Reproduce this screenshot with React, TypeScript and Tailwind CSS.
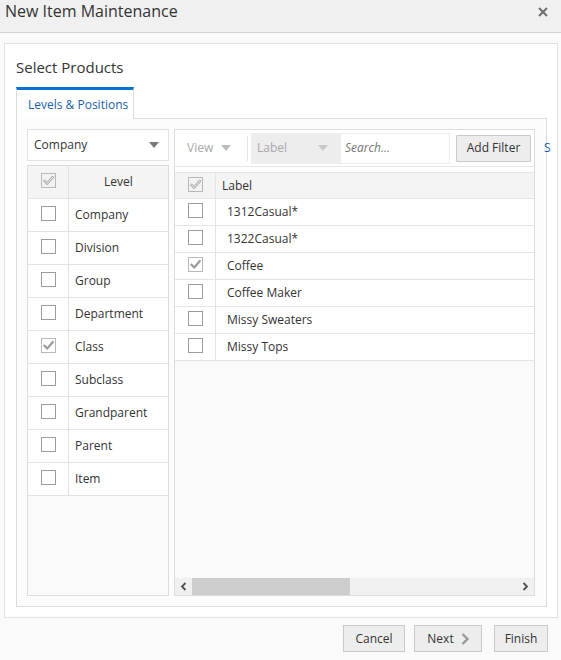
import React from "react";

const CheckBox = ({ checked = false, header = false }: { checked?: boolean; header?: boolean }) => (
  <svg width="15" height="15" viewBox="0 0 15 15" className="block">
    <rect x="0.5" y="0.5" width="14" height="14" fill={header ? "#f3f3f3" : "#ffffff"} stroke={checked || header ? "#b8b8b8" : "#9c9c9c"} />
    {header && (
      <path d="M3.5 7.8 L6.2 10.5 L11.8 4.2" fill="none" stroke="#a9a9a9" strokeWidth="2.6" strokeLinecap="round" strokeLinejoin="round" />
    )}
    {header && (
      <path d="M3.5 7.8 L6.2 10.5 L11.8 4.2" fill="none" stroke="#f3f3f3" strokeWidth="1" strokeLinecap="round" strokeLinejoin="round" />
    )}
    {checked && !header && (
      <path d="M3.3 7.6 L6.2 10.6 L11.8 4" fill="none" stroke="#9a9a9a" strokeWidth="2.2" strokeLinecap="round" strokeLinejoin="round" />
    )}
  </svg>
);

const Caret = ({ color = "#7a7a7a" }: { color?: string }) => (
  <svg width="10" height="6" viewBox="0 0 10 6" className="block">
    <path d="M0 0 H10 L5 6 Z" fill={color} />
  </svg>
);

const levels = [
  { name: "Company" },
  { name: "Division" },
  { name: "Group" },
  { name: "Department" },
  { name: "Class", checked: true },
  { name: "Subclass" },
  { name: "Grandparent" },
  { name: "Parent" },
  { name: "Item" },
];

const labels = [
  { name: "1312Casual*" },
  { name: "1322Casual*" },
  { name: "Coffee", checked: true },
  { name: "Coffee Maker" },
  { name: "Missy Sweaters" },
  { name: "Missy Tops" },
];

export default function App() {
  return (
    <div
      className="w-[561px] h-[660px] bg-[#fafafb] flex flex-col text-[#333333] overflow-hidden"
      style={{ fontFamily: '"Open Sans", "Noto Sans", sans-serif' }}
    >
      {/* Title bar */}
      <div className="h-[33px] shrink-0 bg-[#f0f0f1] border-b border-[#d4d4d6] flex items-start justify-between pl-[5px] pr-[13px]">
        <div className="text-[16px] leading-none text-[#333] pt-[3px]">New Item Maintenance</div>
        <svg width="10" height="10" viewBox="0 0 10 10" className="block mt-[7px]">
          <path d="M1 1 L9 9 M9 1 L1 9" stroke="#6f6f6f" strokeWidth="2" />
        </svg>
      </div>

      {/* Outer panel */}
      <div className="ml-[4px] mr-[3px] mt-[10px] h-[575px] shrink-0 border border-[#e2e2e4] bg-white flex flex-col pl-[11px] pr-[10px]">
        <div className="h-[43px] shrink-0 flex items-end pb-[12px] text-[15px] leading-none text-[#333]">Select Products</div>
        {/* Tab */}
        <div className="flex shrink-0">
          <div className="w-[118px] h-[32px] border-t-[3px] border-t-[#0572ce] border-x border-x-[#dcdcde] bg-white flex items-center pl-[11px] text-[12px] text-[#1a5fa8] -mb-px relative z-10">
            Levels &amp; Positions
          </div>
        </div>
        {/* Tab content */}
        <div className="h-[489px] shrink-0 border border-[#dcdcde] bg-[#fcfcfd] flex gap-[5px] pl-[10px] pr-[11px] pt-[10px] pb-[10px]">
          {/* Left column */}
          <div className="w-[142px] shrink-0 flex flex-col gap-[4px]">
            <div className="h-[32px] shrink-0 border border-[#e2e2e4] bg-white flex items-center justify-between pl-[6px] pr-[9px] text-[12px] text-[#333]">
              <span>Company</span>
              <Caret />
            </div>
            <div className="flex-1 border border-[#dcdcde] bg-[#fafafb] flex flex-col">
              <div className="h-[33px] shrink-0 flex bg-[#f4f4f5] border-b border-[#e2e2e4]">
                <div className="w-[41px] shrink-0 border-r border-[#e2e2e4] flex items-center justify-center pb-[3px]">
                  <CheckBox header />
                </div>
                <div className="flex-1 flex items-center justify-center text-[12px] text-[#333]">Level</div>
              </div>
              {levels.map((l) => (
                <div key={l.name} className="h-[33px] shrink-0 flex bg-white border-b border-[#e2e2e4]">
                  <div className="w-[41px] shrink-0 border-r border-[#e2e2e4] flex items-center justify-center pb-[3px]">
                    <CheckBox checked={!!l.checked} />
                  </div>
                  <div className="flex-1 flex items-center pl-[6px] text-[12px] text-[#333]">{l.name}</div>
                </div>
              ))}
            </div>
          </div>

          {/* Right column */}
          <div className="flex-1 min-w-0 border border-[#dcdcde] bg-[#fafafb] flex flex-col">
            {/* Toolbar */}
            <div className="h-[37px] shrink-0 bg-white border-b border-[#e6e6e8] flex items-center pl-[12px] whitespace-nowrap">
              <div className="shrink-0 flex items-center gap-[8px] text-[12px] text-[#a8a8a8] w-[60px]">
                <span>View</span>
                <Caret color="#bcbcbc" />
              </div>
              <div className="shrink-0 w-px h-[25px] bg-[#e4e4e6] mr-[3px]" />
              <div className="shrink-0 h-[31px] w-[89px] bg-[#ededee] flex items-center justify-between pl-[6px] pr-[12px] text-[12px] text-[#a8a8a8]">
                <span>Label</span>
                <Caret color="#c8c8c8" />
              </div>
              <div className="shrink-0 h-[31px] w-[110px] bg-white border border-[#ececee] flex items-center pl-[4px] text-[12px] text-[#777] italic">
                Search...
              </div>
              <div className="shrink-0 ml-[6px] h-[27px] w-[75px] bg-[#ededee] border border-[#c9c9cb] rounded-[1px] flex items-center justify-center text-[12px] text-[#333]">
                Add Filter
              </div>
              <span className="shrink-0 ml-[13px] text-[12px] text-[#1a5fa8]">S</span>
            </div>
            <div className="h-[5px] shrink-0 bg-white" />
            {/* Table header */}
            <div className="h-[27px] shrink-0 flex bg-[#f4f4f5] border-y border-[#e4e4e6]">
              <div className="w-[41px] shrink-0 border-r border-[#e4e4e6] flex items-center justify-center pb-[2px]">
                <CheckBox header />
              </div>
              <div className="flex-1 flex items-center pl-[6px] text-[12px] text-[#333]">Label</div>
            </div>
            {labels.map((l) => (
              <div key={l.name} className="h-[27px] shrink-0 flex bg-white border-b border-[#e4e4e6]">
                <div className="w-[41px] shrink-0 border-r border-[#e4e4e6] flex items-center justify-center pb-[3px]">
                  <CheckBox checked={!!l.checked} />
                </div>
                <div className="flex-1 flex items-center pl-[11px] text-[12px] text-[#333]">{l.name}</div>
              </div>
            ))}
            <div className="flex-1" />
            {/* Scrollbar */}
            <div className="h-[17px] shrink-0 flex bg-[#f0f0f0]">
              <div className="w-[17px] shrink-0 flex items-center justify-center">
                <svg width="7" height="9" viewBox="0 0 7 9" className="block">
                  <path d="M5.5 1 L2 4.5 L5.5 8" fill="none" stroke="#505050" strokeWidth="1.8" />
                </svg>
              </div>
              <div className="w-[158px] shrink-0 bg-[#cdcdcd]" />
              <div className="flex-1" />
              <div className="w-[17px] shrink-0 flex items-center justify-center">
                <svg width="7" height="9" viewBox="0 0 7 9" className="block">
                  <path d="M1.5 1 L5 4.5 L1.5 8" fill="none" stroke="#505050" strokeWidth="1.8" />
                </svg>
              </div>
            </div>
          </div>
        </div>
      </div>

      {/* Footer */}
      <div className="flex justify-end pr-[13px] pt-[7px]">
        <button className="h-[27px] w-[62px] bg-[#ededee] border border-[#c9c9cb] text-[12px] text-[#333] flex items-center justify-center">
          Cancel
        </button>
        <button className="ml-[9px] h-[27px] w-[68px] bg-[#ededee] border border-[#c9c9cb] text-[12px] text-[#333] flex items-center justify-center gap-[7px]">
          <span>Next</span>
          <svg width="8" height="12" viewBox="0 0 8 12" className="block">
            <path d="M1.5 1 L6.5 6 L1.5 11" fill="none" stroke="#9a9a9a" strokeWidth="2.4" />
          </svg>
        </button>
        <button className="ml-[12px] h-[27px] w-[54px] bg-[#ededee] border border-[#c9c9cb] text-[12px] text-[#333] flex items-center justify-center">
          Finish
        </button>
      </div>
    </div>
  );
}
